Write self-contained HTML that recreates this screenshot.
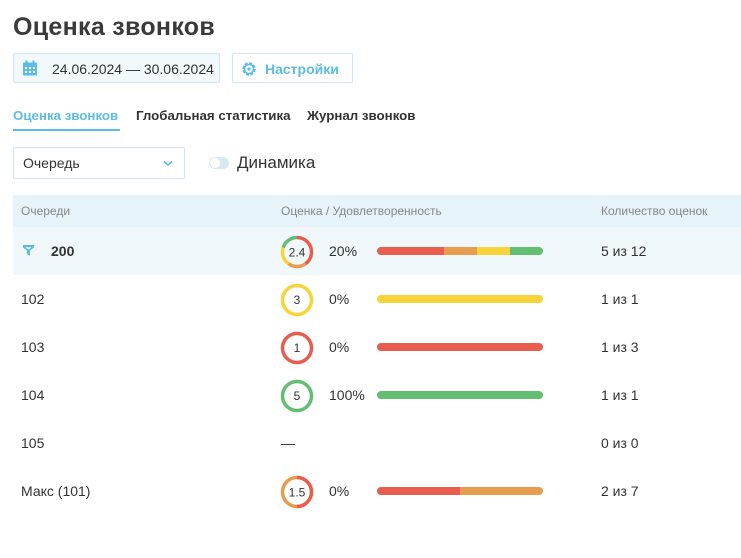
<!DOCTYPE html>
<html><head><meta charset="utf-8"><style>
body{margin:0;background:#fff;font-family:"Liberation Sans",Roboto,sans-serif;color:#333;width:741px;height:558px;overflow:hidden;position:relative}
.a{position:absolute}
h1{position:absolute;left:13px;top:13px;margin:0;font-size:25px;font-weight:bold;color:#3a3a3a;letter-spacing:0.3px}
.btn{position:absolute;top:53px;height:30px;border:1px solid #cfe6f0;border-radius:2px;box-sizing:border-box}
.tab{position:absolute;top:108px;font-size:13.3px;font-weight:bold;color:#333}
.row{position:absolute;left:13px;width:728px;height:48px}
.cell{position:absolute;font-size:14px;color:#333}
.bar{position:absolute;left:377px;width:166px;height:8px;border-radius:4px;overflow:hidden;display:flex}
.ring{position:absolute;left:280px}
</style></head><body>
<h1>Оценка звонков</h1>
<div class="btn" style="left:13px;width:207px;background:#f2f9fc">
 <svg class="a" style="left:8px;top:6px" width="16" height="17" viewBox="0 0 16 17"><rect x="1" y="2.5" width="14" height="13" rx="1" fill="#5bbde6"/><rect x="3.5" y="0.5" width="2" height="4" fill="#5bbde6"/><rect x="10.5" y="0.5" width="2" height="4" fill="#5bbde6"/><g fill="#fff"><rect x="3" y="7" width="2" height="2"/><rect x="7" y="7" width="2" height="2"/><rect x="11" y="7" width="2" height="2"/><rect x="3" y="11" width="2" height="2"/><rect x="7" y="11" width="2" height="2"/><rect x="11" y="11" width="2" height="2"/></g></svg>
 <span class="a" style="left:38px;top:7px;font-size:14px;color:#333">24.06.2024 — 30.06.2024</span>
</div>
<div class="btn" style="left:232px;width:121px;background:#fff">
 <svg class="a" style="left:8px;top:7px" width="16" height="16" viewBox="0 0 16 16"><circle cx="8" cy="8" r="5.5" fill="none" stroke="#5bbde6" stroke-width="2.5" stroke-dasharray="3 1.3"/><circle cx="8" cy="8" r="4.5" fill="none" stroke="#5bbde6" stroke-width="1.5"/><circle cx="8" cy="8" r="1.6" fill="#5bbde6"/></svg>
 <span class="a" style="left:32px;top:7px;font-size:14px;font-weight:bold;color:#5bbde6">Настройки</span>
</div>
<div class="tab" style="left:13px;color:#5bbde6">Оценка звонков</div>
<div class="a" style="left:13px;top:129px;width:107px;height:2px;background:#5bbde6"></div>
<div class="tab" style="left:136px">Глобальная статистика</div>
<div class="tab" style="left:307px">Журнал звонков</div>
<div class="a" style="left:13px;top:147px;width:172px;height:32px;border:1px solid #cfe6f0;box-sizing:border-box;border-radius:2px">
 <span class="a" style="left:9px;top:7px;font-size:14px">Очередь</span>
 <svg class="a" style="left:149px;top:12px" width="10" height="7" viewBox="0 0 10 7"><path d="M1 1.5L5 5L9 1.5" fill="none" stroke="#5bbde6" stroke-width="1.6"/></svg>
</div>
<div class="a" style="left:209px;top:157px;width:20px;height:12px;border-radius:6px;background:#d6e9f1"><div class="a" style="left:1px;top:1px;width:10px;height:10px;border-radius:5px;background:#fff"></div></div>
<span class="a" style="left:237px;top:153px;font-size:17px;color:#333">Динамика</span>

<div class="a" style="left:13px;top:195px;width:728px;height:32px;background:#e6f3f9"></div>
<span class="a" style="left:21px;top:204px;font-size:12px;color:#888">Очереди</span>
<span class="a" style="left:281px;top:204px;font-size:12px;color:#888">Оценка / Удовлетворенность</span>
<span class="a" style="left:601px;top:204px;font-size:12px;color:#888">Количество оценок</span>

<div class="row" style="top:227px;background:#f0f8fb"></div>
<svg class="a" style="left:23px;top:245px" width="11" height="11" viewBox="0 0 11 11"><path d="M0 0H11V2.5L7 5.5V11L4 9V5.5L0 2.5Z" fill="#5bbde6"/><path d="M2.5 2.3H8.5L5.5 4.5Z" fill="#fff"/></svg>
<span class="cell" style="left:51px;top:243px;font-weight:bold">200</span>
<span class="cell" style="left:21px;top:291px">102</span>
<span class="cell" style="left:21px;top:339px">103</span>
<span class="cell" style="left:21px;top:387px">104</span>
<span class="cell" style="left:21px;top:435px">105</span>
<span class="cell" style="left:21px;top:483px">Макс (101)</span>

<svg class="ring" style="top:235px" width="34" height="34" viewBox="0 0 34 34"><g transform="rotate(-90 17 17)" fill="none" stroke-width="3.5">
<circle cx="17" cy="17" r="14.5" stroke="#e85d4e" stroke-dasharray="36.4 200" stroke-dashoffset="0"/>
<circle cx="17" cy="17" r="14.5" stroke="#e89c4e" stroke-dasharray="18.2 200" stroke-dashoffset="-36.4"/>
<circle cx="17" cy="17" r="14.5" stroke="#f8d43a" stroke-dasharray="18.2 200" stroke-dashoffset="-54.6"/>
<circle cx="17" cy="17" r="14.5" stroke="#64be72" stroke-dasharray="18.3 200" stroke-dashoffset="-72.8"/></g>
<text x="17" y="21.5" text-anchor="middle" font-size="12" fill="#333" font-family="Liberation Sans">2.4</text></svg>
<svg class="ring" style="top:283px" width="34" height="34"><circle cx="17" cy="17" r="14.5" fill="none" stroke="#f8d43a" stroke-width="3.5"/><text x="17" y="21" text-anchor="middle" font-size="12" fill="#333" font-family="Liberation Sans">3</text></svg>
<svg class="ring" style="top:331px" width="34" height="34"><circle cx="17" cy="17" r="14.5" fill="none" stroke="#e85d4e" stroke-width="3.5"/><text x="17" y="21" text-anchor="middle" font-size="12" fill="#333" font-family="Liberation Sans">1</text></svg>
<svg class="ring" style="top:379px" width="34" height="34"><circle cx="17" cy="17" r="14.5" fill="none" stroke="#64be72" stroke-width="3.5"/><text x="17" y="21" text-anchor="middle" font-size="12" fill="#333" font-family="Liberation Sans">5</text></svg>
<svg class="ring" style="top:475px" width="34" height="34"><g transform="rotate(-90 17 17)" fill="none" stroke-width="3.5"><circle cx="17" cy="17" r="14.5" stroke="#e89c4e"/><circle cx="17" cy="17" r="14.5" stroke="#e85d4e" stroke-dasharray="45.55 200"/></g><text x="17" y="21.5" text-anchor="middle" font-size="12" fill="#333" font-family="Liberation Sans">1.5</text></svg>

<span class="cell" style="left:329px;top:243px">20%</span>
<span class="cell" style="left:329px;top:291px">0%</span>
<span class="cell" style="left:329px;top:339px">0%</span>
<span class="cell" style="left:329px;top:387px">100%</span>
<span class="cell" style="left:281px;top:435px">—</span>
<span class="cell" style="left:329px;top:483px">0%</span>

<div class="bar" style="top:247px"><div style="width:67px;background:#e85d4e"></div><div style="width:33px;background:#e89c4e"></div><div style="width:33px;background:#f8d43a"></div><div style="width:33px;background:#64be72"></div></div>
<div class="bar" style="top:295px;background:#f8d43a"></div>
<div class="bar" style="top:343px;background:#e85d4e"></div>
<div class="bar" style="top:391px;background:#64be72"></div>
<div class="bar" style="top:487px"><div style="width:83px;background:#e85d4e"></div><div style="width:83px;background:#e89c4e"></div></div>

<span class="cell" style="left:601px;top:243px">5 из 12</span>
<span class="cell" style="left:601px;top:291px">1 из 1</span>
<span class="cell" style="left:601px;top:339px">1 из 3</span>
<span class="cell" style="left:601px;top:387px">1 из 1</span>
<span class="cell" style="left:601px;top:435px">0 из 0</span>
<span class="cell" style="left:601px;top:483px">2 из 7</span>
</body></html>
